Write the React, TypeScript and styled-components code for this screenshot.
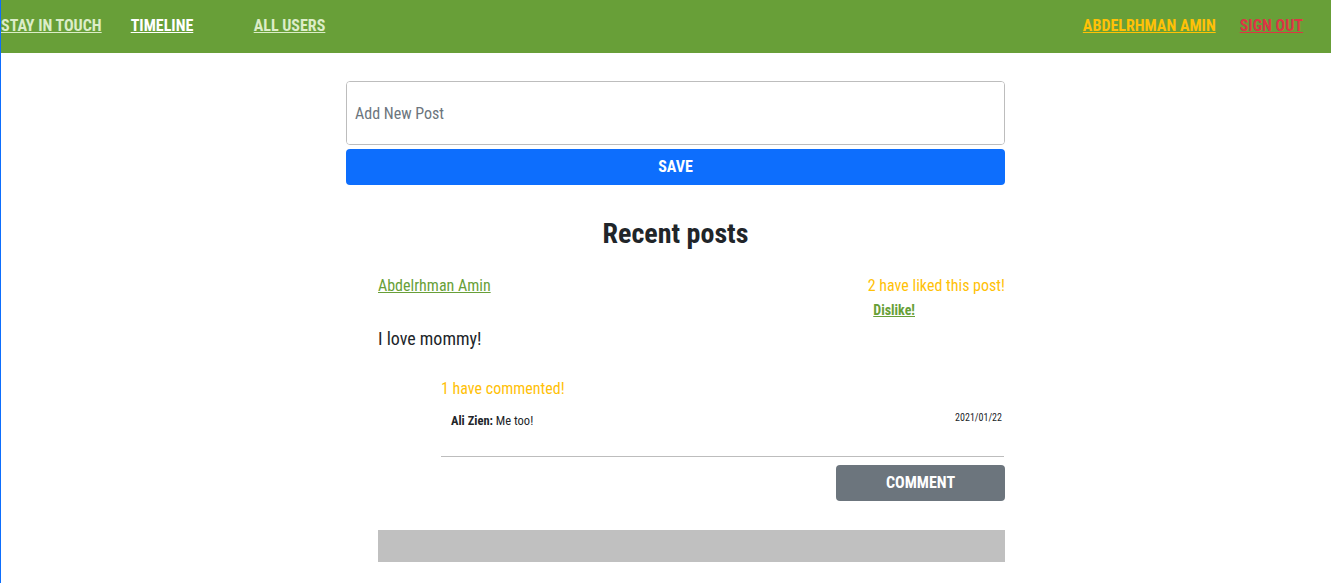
import React from "react";
import styled, { createGlobalStyle } from "styled-components";

const Global = createGlobalStyle`
  html, body { margin: 0; padding: 0; background: #fff; }
  body {
    font-family: "Roboto Condensed", Roboto, "Liberation Sans", sans-serif;
    font-stretch: condensed;
    color: #212529;
    border-left: 1px solid #0d6efd;
    min-height: 583px;
    box-sizing: border-box;
  }
  * { box-sizing: border-box; }
`;

const NavBar = styled.nav`
  height: 53px;
  background: #689f38;
  display: flex;
  align-items: center;
  justify-content: space-between;
  padding: 0 28px 3px 0;
`;

const NavGroup = styled.div<{ $gap: number }>`
  display: flex;
  align-items: center;
  gap: ${(p) => p.$gap}px;
`;

const NavLink = styled.a<{ $color: string; $width?: number }>`
  color: ${(p) => p.$color};
  font-weight: 700;
  font-size: 16px;
  text-transform: uppercase;
  text-decoration: underline;
  ${(p) => (p.$width ? `width: ${p.$width}px;` : "")}
  cursor: pointer;
`;

const Main = styled.main`
  width: 659px;
  margin: 28px 0 0 calc(50% - 320px);
  display: flex;
  flex-direction: column;
`;

const PostInput = styled.textarea`
  height: 64px;
  width: 100%;
  border: 1px solid #bdbdbd;
  border-radius: 4px;
  padding: 22px 8px;
  font-family: inherit;
  font-size: 16px;
  resize: none;
  color: #212529;
  &::placeholder { color: #6c757d; }
`;

const Button = styled.button<{ $bg: string }>`
  background: ${(p) => p.$bg};
  color: #fff;
  border: none;
  border-radius: 4px;
  height: 36px;
  padding: 0 0 2px;
  font-family: inherit;
  font-weight: 700;
  font-size: 16px;
  text-transform: uppercase;
`;

const SaveButton = styled(Button)`
  margin-top: 4px;
  width: 100%;
`;

const Heading = styled.h2`
  margin: 32px 0 0;
  text-align: center;
  font-size: 28px;
  font-weight: 700;
  line-height: 34px;
`;

const Post = styled.article`
  margin: 25px 0 0 32px;
  display: flex;
  flex-direction: column;
`;

const PostHeader = styled.div`
  display: flex;
  justify-content: space-between;
  align-items: flex-start;
`;

const AuthorLink = styled.a`
  color: #689f38;
  font-size: 16px;
  text-decoration: underline;
  line-height: 20px;
`;

const LikeBox = styled.div`
  display: flex;
  flex-direction: column;
  align-items: flex-end;
`;

const Counter = styled.span`
  color: #ffc107;
  font-size: 16px;
  line-height: 20px;
`;

const DislikeLink = styled.a`
  color: #689f38;
  font-weight: 700;
  font-size: 14px;
  text-decoration: underline;
  margin: 5px 90px 0 0;
  line-height: 18px;
`;

const PostBody = styled.p`
  font-size: 18px;
  margin: 8px 0 0;
  line-height: 24px;
`;

const Comments = styled.section`
  margin: 28px 0 0 63px;
  display: flex;
  flex-direction: column;
`;

const Comment = styled.div`
  display: flex;
  justify-content: space-between;
  align-items: flex-start;
  padding: 14px 2px 0 10px;
  margin-right: 1px;
  height: 58px;
  border-bottom: 1px solid #bdbdbd;
`;

const CommentText = styled.span`
  font-size: 12.5px;
  line-height: 16px;
`;

const Author = styled.b`
  font-weight: 700;
`;

const CommentDate = styled.span`
  font-size: 10px;
  line-height: 12px;
  margin-top: -1px;
`;

const CommentButton = styled(Button)`
  align-self: flex-end;
  width: 169px;
  margin-top: 8px;
`;

const Footer = styled.div`
  margin: 29px 0 0 32px;
  height: 32px;
  background: #c0c0c0;
`;

export default function App() {
  return (
    <>
      <Global />
      <NavBar>
        <NavGroup $gap={29}>
          <NavLink $color="#dcedc8">Stay in touch</NavLink>
          <NavLink $color="#ffffff" $width={94}>Timeline</NavLink>
          <NavLink $color="#dcedc8">All users</NavLink>
        </NavGroup>
        <NavGroup $gap={24}>
          <NavLink $color="#ffc107">Abdelrhman Amin</NavLink>
          <NavLink $color="#dc3545">Sign out</NavLink>
        </NavGroup>
      </NavBar>
      <Main>
        <PostInput placeholder="Add New Post" />
        <SaveButton $bg="#0d6efd">Save</SaveButton>
        <Heading>Recent posts</Heading>
        <Post>
          <PostHeader>
            <AuthorLink>Abdelrhman Amin</AuthorLink>
            <LikeBox>
              <Counter>2 have liked this post!</Counter>
              <DislikeLink>Dislike!</DislikeLink>
            </LikeBox>
          </PostHeader>
          <PostBody>I love mommy!</PostBody>
          <Comments>
            <Counter>1 have commented!</Counter>
            <Comment>
              <CommentText>
                <Author>Ali Zien:</Author> Me too!
              </CommentText>
              <CommentDate>2021/01/22</CommentDate>
            </Comment>
            <CommentButton $bg="#6c757d">Comment</CommentButton>
          </Comments>
        </Post>
        <Footer />
      </Main>
    </>
  );
}
